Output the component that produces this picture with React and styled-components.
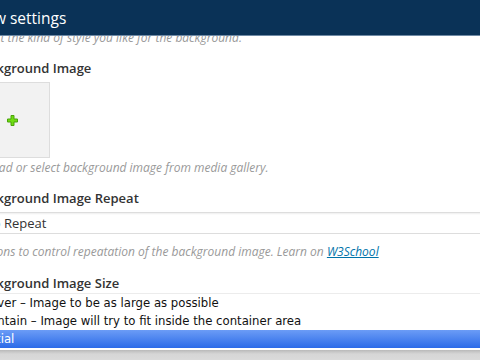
import React from "react";
import styled, { createGlobalStyle } from "styled-components";

const Global = createGlobalStyle`
  html, body {
    margin: 0;
    padding: 0;
    width: 480px;
    height: 360px;
    overflow: hidden;
    background: #fff;
  }
`;

const Modal = styled.div`
  width: 540px;
  height: 360px;
  margin-left: -26px;
  display: flex;
  flex-direction: column;
  font-family: "Open Sans", sans-serif;
  overflow: hidden;
`;

const Header = styled.header`
  flex: none;
  height: 35px;
  background-color: #0a3257;
  border-bottom: 1px solid #6f8aa5;
  display: flex;
  align-items: center;
  padding-left: 1px;
  position: relative;
  z-index: 1;
`;

const Title = styled.h2`
  margin: 0;
  color: #fff;
  font-size: 15.5px;
  font-weight: 400;
  line-height: 20px;
`;

const Body = styled.div`
  flex: 1;
  display: flex;
  flex-direction: column;
  overflow: hidden;
`;

const Desc = styled.p`
  margin: ${({ top }) => top || "1px"} 0 0;
  color: #999;
  font-size: 12px;
  font-style: italic;
  line-height: 18px;

  a {
    color: #0073aa;
  }
`;

const Field = styled.section`
  margin-top: ${({ gap }) => gap || "12px"};
  display: flex;
  flex-direction: column;
`;

const Label = styled.h4`
  margin: 0 0 5px;
  color: #333;
  font-size: 13px;
  font-weight: 600;
  line-height: 18px;
`;

const ImageBox = styled.div`
  width: 74px;
  height: 74px;
  border: 1px solid #ddd;
  background-color: #f2f2f2;
  display: flex;
  align-items: center;
  justify-content: center;
`;

const Select = styled.div`
  height: 20px;
  border: 1px solid #ddd;
  box-shadow: inset 0 1px 2px rgba(0, 0, 0, 0.07);
  display: flex;
  align-items: center;
  padding-left: 8px;
  color: #333;
  font-size: 13px;
`;

const List = styled.ul`
  list-style: none;
  margin: -4px 0 0;
  padding: 0;
  border-top: 1px solid #ececec;
  background: #fff;
  font-family: "DejaVu Sans", sans-serif;
  font-size: 11.7px;
`;

const Option = styled.li`
  height: 18px;
  line-height: 18px;
  padding-left: 8px;
  color: ${({ selected }) => (selected ? "#fff" : "#111")};
  background: ${({ selected }) =>
    selected ? "linear-gradient(#6b9cf6, #2c6be8)" : "transparent"};
`;

const Shade = styled.div`
  flex: 1;
  border-top: 2px solid #fff;
  background: linear-gradient(#b9b9b9, #d6d6d6 40%, #dadada);
`;

const Plus = () => (
  <svg width="11" height="11" viewBox="0 0 11 11">
    <path
      d="M4 0.5h3v3.5h3.5v3h-3.5v3.5h-3v-3.5h-3.5v-3h3.5z"
      fill="#6fdc12"
      stroke="#4aa30a"
      strokeWidth="1"
    />
  </svg>
);

export default function App() {
  return (
    <>
      <Global />
      <Modal>
        <Header>
          <Title>Row settings</Title>
        </Header>
        <Body>
          <Desc top="-7px">Select the kind of style you like for the background.</Desc>

          <Field gap="12px">
            <Label>Background Image</Label>
            <ImageBox>
              <Plus />
            </ImageBox>
            <Desc>Upload or select background image from media gallery.</Desc>
          </Field>

          <Field>
            <Label>Background Image Repeat</Label>
            <Select>No Repeat</Select>
            <Desc top="9px">
              Options to control repeatation of the background image. Learn on{" "}
              <a href="#">W3School</a>
            </Desc>
          </Field>

          <Field gap="13px">
            <Label>Background Image Size</Label>
            <List>
              <Option>Cover – Image to be as large as possible</Option>
              <Option>Contain – Image will try to fit inside the container area</Option>
              <Option selected>Initial</Option>
            </List>
          </Field>
          <Shade />
        </Body>
      </Modal>
    </>
  );
}
